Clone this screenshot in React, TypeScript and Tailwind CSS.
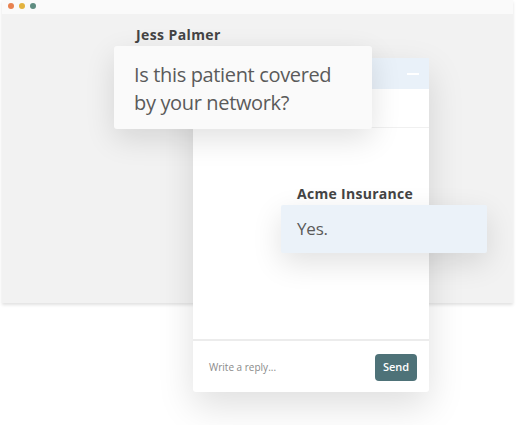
import React from "react";

export default function App() {
  const font = { fontFamily: '"Open Sans", "Liberation Sans", sans-serif' };
  return (
    <div className="relative w-[523px] h-[425px] bg-white overflow-hidden" style={font}>
      {/* Browser frame */}
      <div className="absolute left-[2px] top-0 w-[511px] h-[303px] flex flex-col bg-[#f2f2f2] shadow-[0_2px_3px_rgba(0,0,0,0.12)]">
        <div className="h-[14px] bg-[#fafafa] flex items-center gap-[5px] pl-[6px] pb-[2px]">
          <span className="w-[6px] h-[6px] rounded-full bg-[#e8814f]" />
          <span className="w-[6px] h-[6px] rounded-full bg-[#e3b33e]" />
          <span className="w-[6px] h-[6px] rounded-full bg-[#5e8c80]" />
        </div>
        <div className="flex-1" />
      </div>

      {/* Chat window */}
      <div className="absolute left-[193px] top-[58px] w-[236px] h-[334px] bg-white flex flex-col shadow-[0_14px_36px_rgba(0,0,0,0.13)] rounded-b-[3px]">
        <div className="h-[31px] bg-[#e9f1f9] flex items-center justify-end pr-[10px]">
          <span className="w-[12px] h-[2px] bg-white" />
        </div>
        <div className="h-[39px] border-b border-[#f0f0f0]" />
        <div className="flex-1 border-b-2 border-[#ececec]" />
        <div className="h-[51px] flex items-center justify-between pl-[16px] pr-[12px] pt-[2px]">
          <span className="text-[10px] text-[#8a8a8a]">Write a reply...</span>
          <button className="w-[42px] h-[27px] rounded-[4px] bg-[#4e7278] text-white text-[11px] font-semibold">
            Send
          </button>
        </div>
      </div>

      {/* Jess Palmer */}
      <div className="absolute left-[136px] top-[25px] text-[14px] leading-[20px] font-bold tracking-[0.4px] text-[#444]">Jess Palmer</div>
      <div className="absolute left-[114px] top-[46px] w-[258px] h-[83px] bg-[#fafafa] rounded-[3px] shadow-[0_10px_30px_rgba(0,0,0,0.12)] pl-[20px] pt-[15px] text-[20px] leading-[28px] tracking-[-0.35px] text-[#5a5a5a]">
        Is this patient covered
        <br />
        by your network?
      </div>

      {/* Acme Insurance */}
      <div className="absolute left-[297px] top-[184px] text-[14px] leading-[20px] font-bold tracking-[0.3px] text-[#444]">Acme Insurance</div>
      <div className="absolute left-[281px] top-[205px] w-[206px] h-[48px] bg-[#ebf2f9] rounded-[2px] shadow-[0_10px_30px_rgba(0,0,0,0.12)] flex items-center pl-[16px] text-[17px] tracking-[-0.2px] text-[#5a5a5a]">
        Yes.
      </div>
    </div>
  );
}
